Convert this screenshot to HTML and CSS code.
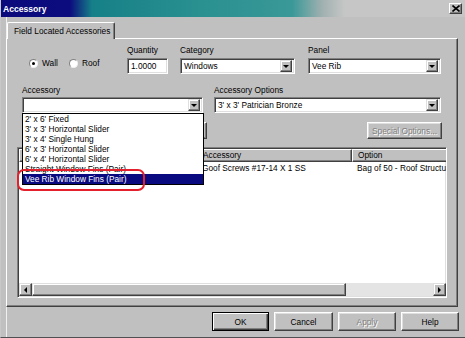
FILE: index.html
```html
<!DOCTYPE html>
<html lang="en">
<head>
  <meta charset="UTF-8">
  <title>Accessory</title>
  <link rel="stylesheet" href="styles.css">
</head>
<body>
  <div class="window">
    <div class="titlebar">
      <span class="title">Accessory</span>
      <span class="close">
        <svg width="8" height="7" viewBox="0 0 8 7"><path d="M0.5 0.5 L7.5 6.5 M7.5 0.5 L0.5 6.5" stroke="#000" stroke-width="1.6" fill="none"/></svg>
      </span>
    </div>

    <div class="tabs">
      <div class="tab">Field Located Accessories</div>
    </div>

    <div class="panel">
      <div class="row row-top">
        <div class="radios">
          <label class="radio-item wall"><span class="radio checked"></span>Wall</label>
          <label class="radio-item"><span class="radio"></span>Roof</label>
        </div>
        <div class="field f-qty">
          <div class="lbl">Quantity</div>
          <div class="edit">1.0000</div>
        </div>
        <div class="field f-cat">
          <div class="lbl">Category</div>
          <div class="combo"><span class="val">Windows</span><span class="drop"></span></div>
        </div>
        <div class="field f-panel">
          <div class="lbl">Panel</div>
          <div class="combo"><span class="val">Vee Rib</span><span class="drop"></span></div>
        </div>
      </div>

      <div class="row row-mid">
        <div class="field f-acc">
          <div class="lbl">Accessory</div>
          <div class="combo"><span class="val"></span><span class="drop"></span></div>
          <ul class="dropdown">
            <li>2' x 6' Fixed</li>
            <li>3' x 3' Horizontal Slider</li>
            <li>3' x 4' Single Hung</li>
            <li>6' x 3' Horizontal Slider</li>
            <li>6' x 4' Horizontal Slider</li>
            <li>Straight Window Fins (Pair)</li>
            <li class="selected">Vee Rib Window Fins (Pair)</li>
          </ul>
          <div class="ring"></div>
        </div>
        <div class="field f-opt">
          <div class="lbl">Accessory Options</div>
          <div class="combo"><span class="val">3' x 3' Patrician Bronze</span><span class="drop"></span></div>
        </div>
      </div>

      <div class="row row-btns">
        <button class="btn btn-add"></button>
        <button class="btn btn-special disabled">Special Options...</button>
      </div>

      <div class="listview">
        <div class="lv-head">
          <div class="lv-cell c1"></div>
          <div class="lv-cell c2">Accessory</div>
          <div class="lv-cell c3">Option</div>
        </div>
        <div class="lv-body">
          <div class="lv-row">
            <div class="lv-td c1"></div>
            <div class="lv-td c2">Goof Screws #17-14 X 1 SS</div>
            <div class="lv-td c3">Bag of 50 - Roof Structural</div>
          </div>
        </div>
        <div class="hscroll">
          <span class="sb-btn sb-left"></span>
          <span class="sb-thumb"></span>
          <span class="sb-track"></span>
          <span class="sb-btn sb-right"></span>
        </div>
      </div>
    </div>

    <div class="buttons">
      <button class="btn btn-ok default">OK</button>
      <button class="btn btn-cancel">Cancel</button>
      <button class="btn btn-apply disabled">Apply</button>
      <button class="btn btn-help">Help</button>
    </div>
  </div>
</body>
</html>
```

FILE: styles.css
```css
* {
  box-sizing: border-box;
}
body {
  margin: 0;
  font-family: "Liberation Sans", Arial, sans-serif;
  font-size: 8.3px;
  color: #000;
  background: #c0c0c0;
}
.window {
  width: 465px;
  height: 338px;
  background: #c0c0c0;
  border-left: 1px solid #c8c8c8;
  border-bottom: 1px solid #505050;
  box-shadow: inset 5px 0 0 #c0c0c0, inset 6px 0 0 #f0f0f0;
  overflow: hidden;
}
.titlebar {
  height: 17px;
  display: flex;
  align-items: center;
  justify-content: space-between;
  padding: 0 3px 0 3px;
  margin-left: -1px;
  background: linear-gradient(90deg, #0a0a7c 0, #0c0c7e 70px, #168088 92px, #2a9090 200px, #3a9898 292px, #a0b0b0 322px, #c6c6c6 345px, #c6c6c6 100%);
}
.title {
  color: #fff;
  font-weight: bold;
  font-size: 8.6px;
}
.close {
  width: 13px;
  height: 11px;
  display: flex;
  align-items: center;
  justify-content: center;
  background: #c0c0c0;
  border: 1px solid;
  border-color: #fff #404040 #404040 #fff;
  box-shadow: inset -1px -1px #808080;
}
.tabs {
  display: flex;
  margin-top: 5px;
  padding-left: 6px;
}
.tab {
  position: relative;
  z-index: 1;
  height: 17px;
  margin-bottom: -1px;
  padding: 3px 0 0 6px;
  width: 108px;
  background: #c0c0c0;
  border: 1px solid;
  border-bottom: none;
  border-color: #fff #404040 #c0c0c0 #fff;
  border-radius: 2px 2px 0 0;
  box-shadow: inset -1px 0 #808080;
  line-height: 11px;
  white-space: nowrap;
}
.panel {
  margin-left: 5px;
  width: 452px;
  height: 269px;
  border: 1px solid;
  border-color: #fff #404040 #404040 #fff;
  box-shadow: inset -1px -1px #808080;
  padding-top: 6px;
}
.row {
  display: flex;
}
.row-top {
  align-items: flex-end;
  height: 29px;
}
.radios {
  display: flex;
  margin-left: 22px;
  width: 98px;
  height: 16px;
  margin-bottom: 3px;
  align-items: center;
}
.radio-item {
  display: flex;
  align-items: center;
  gap: 4px;
}
.radio-item.wall {
  width: 40px;
}
.radio {
  width: 9px;
  height: 9px;
  border-radius: 50%;
  background: #fff;
  border: 1px solid;
  border-color: #808080 #f0f0f0 #f0f0f0 #808080;
  display: flex;
  align-items: center;
  justify-content: center;
}
.radio.checked::after {
  content: "";
  width: 3px;
  height: 3px;
  border-radius: 50%;
  background: #000;
}
.field {
  display: flex;
  flex-direction: column;
}
.lbl {
  height: 11px;
  line-height: 11px;
  white-space: nowrap;
}
.edit,
.combo {
  height: 16px;
  background: #fff;
  border: 1px solid;
  border-color: #808080 #fff #fff #808080;
  box-shadow: inset 1px 1px #404040, inset -1px -1px #dfdfdf;
}
.row-top .edit,
.row-top .combo {
  margin-top: 2px;
}
.edit {
  padding: 0 3px;
  line-height: 14px;
}
.combo {
  display: flex;
  align-items: center;
  justify-content: space-between;
  padding: 2px;
}
.val {
  padding-left: 1px;
  white-space: nowrap;
  line-height: 11px;
}
.drop {
  width: 12px;
  height: 12px;
  flex-shrink: 0;
  background: #c0c0c0;
  border: 1px solid;
  border-color: #dfdfdf #404040 #404040 #dfdfdf;
  box-shadow: inset -1px -1px #808080, inset 1px 1px #fff;
  display: flex;
  align-items: center;
  justify-content: center;
}
.drop::after {
  content: "";
  border-left: 3px solid transparent;
  border-right: 3px solid transparent;
  border-top: 3px solid #000;
}
.f-qty {
  width: 41px;
}
.f-cat {
  margin-left: 12px;
  width: 115px;
}
.f-panel {
  margin-left: 13px;
  width: 133px;
}
.row-mid {
  margin-top: 11px;
}
.row-mid .combo {
  margin-top: 1px;
}
.f-acc {
  position: relative;
  margin-left: 15px;
  width: 181px;
}
.f-opt {
  margin-left: 11px;
  width: 227px;
}
.dropdown {
  position: absolute;
  z-index: 5;
  top: 28px;
  left: 0;
  width: 182px;
  margin: 0;
  padding: 0;
  list-style: none;
  background: #fff;
  border: 1px solid #000;
}
.dropdown li {
  height: 10px;
  line-height: 10px;
  padding-left: 2px;
  white-space: nowrap;
}
.dropdown li.selected {
  background: #0a0a80;
  color: #fff;
}
.ring {
  position: absolute;
  z-index: 6;
  left: -5px;
  top: 84px;
  width: 128px;
  height: 22px;
  border: 2px solid #e4202c;
  border-radius: 7px;
}
.row-btns {
  margin-top: 9px;
  height: 17px;
}
.btn {
  font-family: inherit;
  font-size: inherit;
  color: #000;
  background: #c0c0c0;
  border: 1px solid;
  border-color: #fff #404040 #404040 #fff;
  box-shadow: inset -1px -1px #808080, inset 1px 1px #dfdfdf;
  padding: 0;
  margin: 0;
  white-space: nowrap;
}
.btn.disabled {
  color: #808080;
  text-shadow: 1px 1px #fff;
}
.btn-add {
  margin-left: 133px;
  width: 67px;
}
.btn-special {
  margin-left: 160px;
  width: 75px;
}
.listview {
  margin-top: 8px;
  margin-left: 10px;
  width: 430px;
  height: 151px;
  background: #fff;
  border: 1px solid;
  border-color: #808080 #fff #fff #808080;
  box-shadow: inset 1px 1px #404040, inset -1px -1px #dfdfdf;
  padding: 1px;
  display: flex;
  flex-direction: column;
  overflow: hidden;
}
.lv-head {
  display: flex;
  height: 13px;
  flex-shrink: 0;
}
.lv-cell {
  flex-shrink: 0;
  background: #c0c0c0;
  border: 1px solid;
  border-color: #fff #404040 #404040 #fff;
  box-shadow: inset -1px -1px #808080;
  padding-left: 5px;
  line-height: 10px;
  white-space: nowrap;
}
.c1 {
  width: 178px;
}
.c2 {
  width: 155px;
}
.c3 {
  width: 130px;
}
.lv-body {
  flex: 1;
}
.lv-row {
  display: flex;
  height: 11px;
  margin-top: 1px;
}
.lv-td {
  flex-shrink: 0;
  padding-left: 5px;
  line-height: 11px;
  white-space: nowrap;
  overflow: hidden;
}
.hscroll {
  display: flex;
  height: 13px;
  flex-shrink: 0;
  margin-right: -1px;
}
.sb-btn,
.sb-thumb {
  background: #c0c0c0;
  border: 1px solid;
  border-color: #dfdfdf #404040 #404040 #dfdfdf;
  box-shadow: inset -1px -1px #808080, inset 1px 1px #fff;
}
.sb-btn {
  width: 13px;
  display: flex;
  align-items: center;
  justify-content: center;
}
.sb-left::after {
  content: "";
  border-top: 3px solid transparent;
  border-bottom: 3px solid transparent;
  border-right: 3px solid #000;
}
.sb-right::after {
  content: "";
  border-top: 3px solid transparent;
  border-bottom: 3px solid transparent;
  border-left: 3px solid #000;
}
.sb-thumb {
  width: 314px;
}
.sb-track {
  flex: 1;
  background: #e4e4e4;
}
.buttons {
  display: flex;
  justify-content: flex-end;
  gap: 5px;
  margin-top: 5px;
  padding-right: 6px;
}
.buttons .btn {
  height: 19px;
}
.btn-ok {
  width: 57px;
}
.btn.default {
  border: 1px solid #000;
  box-shadow: inset 1px 1px #fff, inset -1px -1px #404040, inset -2px -2px #808080;
}
.btn-cancel {
  width: 59px;
}
.btn-apply {
  width: 58px;
}
.btn-help {
  width: 58px;
}
```
